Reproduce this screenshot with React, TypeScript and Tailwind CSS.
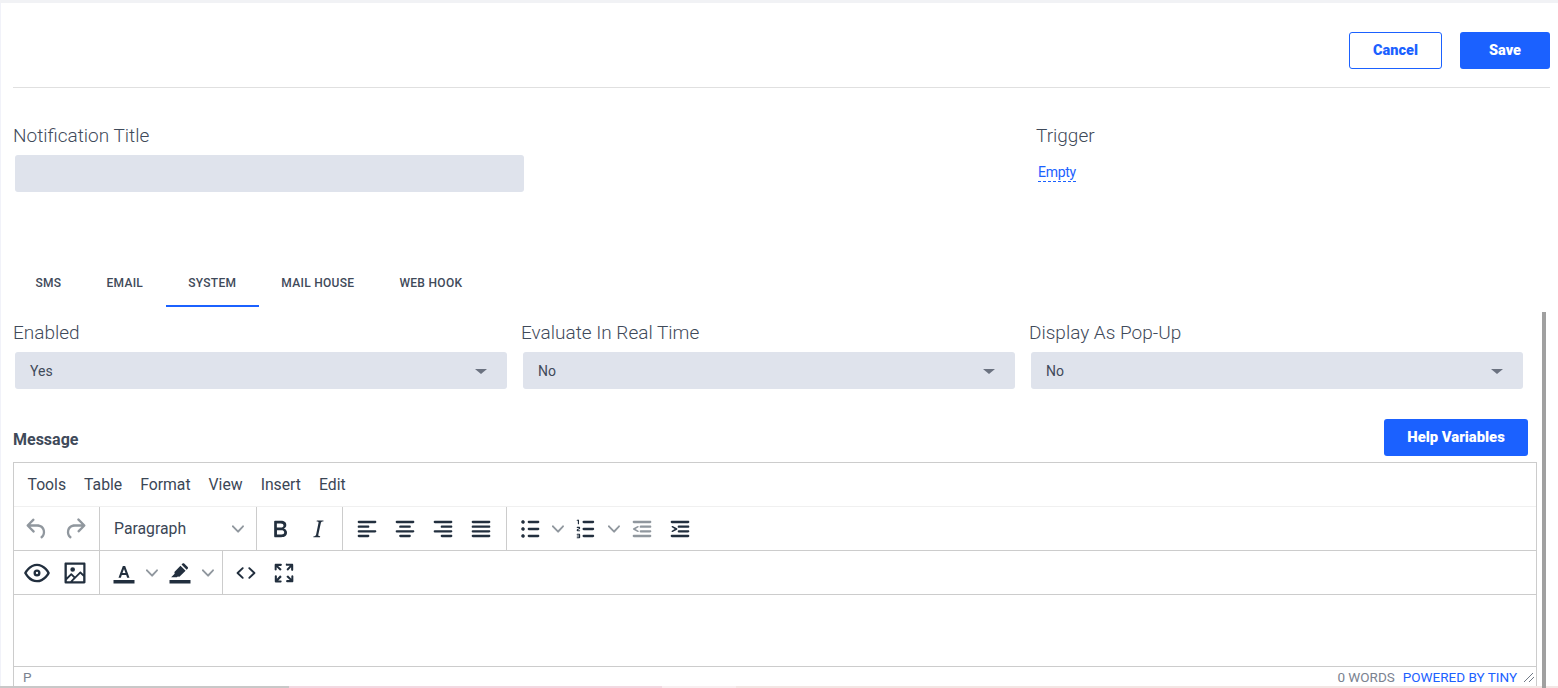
import type { ReactNode } from "react";

const tabs = ["SMS", "EMAIL", "SYSTEM", "MAIL HOUSE", "WEB HOOK"];
const menus = ["Tools", "Table", "Format", "View", "Insert", "Edit"];
const selects = [
  { label: "Enabled", value: "Yes" },
  { label: "Evaluate In Real Time", value: "No" },
  { label: "Display As Pop-Up", value: "No" },
];

const paths = {
  undo: "M6.4 8H12c3.7 0 6.2 2 6.8 5.1.6 2.7-.4 5.6-2.3 6.8a1 1 0 0 1-1-1.8c1.1-.6 1.8-2.7 1.4-4.6-.5-2.1-2.1-3.5-4.9-3.5H6.4l3.3 3.3a1 1 0 1 1-1.4 1.4l-5-5a1 1 0 0 1 0-1.4l5-5a1 1 0 0 1 1.4 1.4L6.4 8z",
  redo: "M17.6 10H12c-2.8 0-4.4 1.4-4.9 3.5-.4 2 .3 4 1.4 4.6a1 1 0 1 1-1 1.8c-2-1.2-2.9-4.1-2.3-6.8.6-3 3-5.1 6.8-5.1h5.6l-3.3-3.3a1 1 0 1 1 1.4-1.4l5 5a1 1 0 0 1 0 1.4l-5 5a1 1 0 0 1-1.4-1.4l3.3-3.3z",
  bold: "M7.8 19c-.3 0-.5 0-.6-.2l-.2-.5V5.7c0-.2 0-.4.2-.5l.6-.2h5c1.5 0 2.7.3 3.5 1 .7.6 1.1 1.4 1.1 2.5a3 3 0 0 1-.6 1.9c-.4.6-1 1-1.6 1.2.4.1.9.3 1.3.6s.8.7 1 1.2c.4.4.5 1 .5 1.6 0 1.3-.4 2.3-1.3 3-.8.7-2.1 1-3.8 1H7.8zm5-8.3c.6 0 1.2-.1 1.6-.5.4-.3.6-.7.6-1.3 0-1.1-.8-1.7-2.3-1.7H9.3v3.5h3.4zm.5 6c.7 0 1.3-.1 1.7-.4.4-.4.6-.9.6-1.5s-.2-1-.7-1.4c-.4-.3-1-.4-2-.4H9.4v3.8h4z",
  italic: "M16.7 4.7l-.1.9h-.3c-.6 0-1 0-1.4.3-.3.3-.4.6-.5 1.1l-2.1 9.8v.6c0 .5.4.8 1.4.8h.2l-.2.8H8l.2-.8h.2c1.1 0 1.8-.5 2-1.5l2-9.8.1-.5c0-.6-.4-.8-1.4-.8h-.3l.2-.9h5.8z",
  alignLeft: "M5 5h14c.6 0 1 .4 1 1s-.4 1-1 1H5a1 1 0 1 1 0-2zm0 4h8c.6 0 1 .4 1 1s-.4 1-1 1H5a1 1 0 1 1 0-2zm0 8h8c.6 0 1 .4 1 1s-.4 1-1 1H5a1 1 0 0 1 0-2zm0-4h14c.6 0 1 .4 1 1s-.4 1-1 1H5a1 1 0 0 1 0-2z",
  alignCenter: "M5 5h14c.6 0 1 .4 1 1s-.4 1-1 1H5a1 1 0 1 1 0-2zm3 4h8c.6 0 1 .4 1 1s-.4 1-1 1H8a1 1 0 1 1 0-2zm0 8h8c.6 0 1 .4 1 1s-.4 1-1 1H8a1 1 0 0 1 0-2zm-3-4h14c.6 0 1 .4 1 1s-.4 1-1 1H5a1 1 0 0 1 0-2z",
  alignRight: "M5 5h14c.6 0 1 .4 1 1s-.4 1-1 1H5a1 1 0 1 1 0-2zm6 4h8c.6 0 1 .4 1 1s-.4 1-1 1h-8a1 1 0 0 1 0-2zm0 8h8c.6 0 1 .4 1 1s-.4 1-1 1h-8a1 1 0 0 1 0-2zm-6-4h14c.6 0 1 .4 1 1s-.4 1-1 1H5a1 1 0 0 1 0-2z",
  justify: "M5 5h14c.6 0 1 .4 1 1s-.4 1-1 1H5a1 1 0 1 1 0-2zm0 4h14c.6 0 1 .4 1 1s-.4 1-1 1H5a1 1 0 1 1 0-2zm0 4h14c.6 0 1 .4 1 1s-.4 1-1 1H5a1 1 0 0 1 0-2zm0 4h14c.6 0 1 .4 1 1s-.4 1-1 1H5a1 1 0 0 1 0-2z",
  bullets: "M11 5h8c.6 0 1 .4 1 1s-.4 1-1 1h-8a1 1 0 0 1 0-2zm0 6h8c.6 0 1 .4 1 1s-.4 1-1 1h-8a1 1 0 0 1 0-2zm0 6h8c.6 0 1 .4 1 1s-.4 1-1 1h-8a1 1 0 0 1 0-2zM4.5 6c0-.4.1-.8.4-1 .3-.4.7-.5 1.1-.5.4 0 .8.1 1 .4.4.3.5.7.5 1.1 0 .4-.1.8-.4 1-.3.4-.7.5-1.1.5-.4 0-.8-.1-1-.4-.4-.3-.5-.7-.5-1.1zm0 6c0-.4.1-.8.4-1 .3-.4.7-.5 1.1-.5.4 0 .8.1 1 .4.4.3.5.7.5 1.1 0 .4-.1.8-.4 1-.3.4-.7.5-1.1.5-.4 0-.8-.1-1-.4-.4-.3-.5-.7-.5-1.1zm0 6c0-.4.1-.8.4-1 .3-.4.7-.5 1.1-.5.4 0 .8.1 1 .4.4.3.5.7.5 1.1 0 .4-.1.8-.4 1-.3.4-.7.5-1.1.5-.4 0-.8-.1-1-.4-.4-.3-.5-.7-.5-1.1z",
  numbers: "M10 17h8c.6 0 1 .4 1 1s-.4 1-1 1h-8a1 1 0 0 1 0-2zm0-6h8c.6 0 1 .4 1 1s-.4 1-1 1h-8a1 1 0 0 1 0-2zm0-6h8c.6 0 1 .4 1 1s-.4 1-1 1h-8a1 1 0 1 1 0-2zM6 4v3.5c0 .3-.2.5-.5.5a.5.5 0 0 1-.5-.5V5h-.5a.5.5 0 0 1 0-1H6zm-1 8.8l.2.2h1.3c.3 0 .5.2.5.5s-.2.5-.5.5H4.9a1 1 0 0 1-.9-1V13c0-.4.3-.8.6-1l1.2-.4.2-.3a.2.2 0 0 0-.2-.2H4.5a.5.5 0 0 1-.5-.5c0-.3.2-.5.5-.5h1.6c.5 0 .9.4.9 1v.1c0 .4-.3.8-.6 1l-1.2.4-.2.3zM7 17v2c0 .6-.4 1-1 1H4.5a.5.5 0 0 1 0-1h1.2c.2 0 .3-.1.3-.3 0-.2-.1-.3-.3-.3H4.4a.4.4 0 1 1 0-.8h1.3c.2 0 .3-.1.3-.3 0-.2-.1-.3-.3-.3H4.5a.5.5 0 1 1 0-1H6c.6 0 1 .4 1 1z",
  outdent: "M5 5h14c.6 0 1 .4 1 1s-.4 1-1 1H5a1 1 0 1 1 0-2zm6 4h8c.6 0 1 .4 1 1s-.4 1-1 1h-8a1 1 0 0 1 0-2zm0 4h8c.6 0 1 .4 1 1s-.4 1-1 1h-8a1 1 0 0 1 0-2zm-6 4h14a1 1 0 0 1 0 2H5a1 1 0 0 1 0-2zm3.300-2.400L4.600 12.700a.9.9 0 0 1 0-1.400l3.700-1.900c.4-.2.900.1.900.5v.2c0 .2-.1.400-.3.500L6.500 12l2.400 1.400c.2.100.3.300.3.500v.2c0 .4-.5.700-.9.500z",
  indent: "M5 5h14c.6 0 1 .4 1 1s-.4 1-1 1H5a1 1 0 1 1 0-2zm6 4h8c.6 0 1 .4 1 1s-.4 1-1 1h-8a1 1 0 0 1 0-2zm0 4h8c.6 0 1 .4 1 1s-.4 1-1 1h-8a1 1 0 0 1 0-2zm-6 4h14a1 1 0 0 1 0 2H5a1 1 0 0 1 0-2zm.700-2.400l3.700-1.900a.9.9 0 0 0 0-1.400L5.700 9.400c-.4-.2-.9.1-.9.5v.2c0 .2.1.400.3.500L7.500 12l-2.400 1.400c-.2.100-.3.300-.3.500v.2c0 .4.5.700.900.500z",
  eye: "M3.5 12.5c.5.8 1.1 1.6 1.8 2.3 2 2 4.2 3.2 6.7 3.2s4.7-1.2 6.7-3.2a16.2 16.2 0 0 0 2.1-2.8 15.7 15.7 0 0 0-2.1-2.8c-2-2-4.2-3.2-6.7-3.2a9.3 9.3 0 0 0-6.7 3.2A16.2 16.2 0 0 0 3.2 12c0 .2.2.3.3.5zm-2.4-1l.7-1.2L4 7.8C6.2 5.4 8.9 4 12 4c3 0 5.8 1.4 8.1 3.8a18.2 18.2 0 0 1 2.8 3.7v1l-.7 1.2-2.1 2.5c-2.3 2.4-5 3.8-8.1 3.8a11 11 0 0 1-8.1-3.8 18.2 18.2 0 0 1-2.8-3.7 1 1 0 0 1 0-1zM12 15a3 3 0 1 1 0-6 3 3 0 0 1 0 6zm0-2a1 1 0 1 0 0-2 1 1 0 0 0 0 2z",
  image: "M5 15.7l3.3-3.2c.3-.3.7-.3 1 0L12 15l4.1-4c.3-.4.8-.4 1 0l2 1.9V5H5v10.7zM5 18V19h3l2.8-2.9-2-2L5 17.9zm14-3l-2.5-2.4-6.4 6.5H19v-4zM4 3h16c.6 0 1 .4 1 1v16c0 .6-.4 1-1 1H4a1 1 0 0 1-1-1V4c0-.6.4-1 1-1zm6 8a2 2 0 1 0 0-4 2 2 0 0 0 0 4z",
  textColor: "M3 18h18v3H3zM11 6h2l3.700 10h-2l-.8-2.300H10.100L9.300 16h-2L11 6zm-.3 6h2.600L12 8.500 10.700 12z",
  highlight: "M3 18h18v3H3zM15.600 3.900l3 3c.4.4.4 1 0 1.400l-.9.900-4.400-4.400.9-.9c.4-.4 1-.4 1.400 0zM12.400 5.700l4.400 4.400-5.300 5.100-1.400-.3-.8.700H4.400l3-3-.2-1.400z",
  code: "M9.800 15.700c.3.3.3.8 0 1-.3.400-.9.400-1.200 0l-4.400-4.100a.8.8 0 0 1 0-1.200l4.400-4.200c.3-.3.900-.3 1.200 0 .3.300.3.800 0 1.100L6 12l3.800 3.700zM14.200 15.700L18 12l-3.800-3.700a.8.8 0 0 1 0-1.100c.3-.3.900-.3 1.200 0l4.400 4.200c.3.300.3.900 0 1.200l-4.400 4.100c-.3.400-.9.400-1.200 0a.8.8 0 0 1 0-1z",
  fullscreen: "M15.300 10l-1.200-1.300 2.900-3h-2.300a.9.9 0 1 1 0-1.700H19c.5 0 .9.400.9.900v4.400a.9.9 0 1 1-1.800 0V7l-2.800 3zm0 4l3 2.900v-2.300a.9.9 0 0 1 1.700 0V19c0 .5-.4.900-.9.900h-4.400a.9.9 0 0 1 0-1.800H17l-3-2.800 1.300-1.200zM10 15.400l-2.900 3h2.300a.9.9 0 0 1 0 1.700H5a.9.900 0 0 1-.9-.9v-4.400a.9.9 0 0 1 1.800 0V17l2.800-3 1.200 1.300zM8.700 10L5.700 7v2.300a.9.9 0 0 1-1.700 0V5c0-.5.400-.9.900-.9h4.400a.9.9 0 0 1 0 1.800H7l3 2.800L8.700 10z",
};

function Icon({ d, muted }: { d: string; muted?: boolean }) {
  return (
    <svg width="28" height="28" viewBox="0 0 24 24" fillRule="evenodd" className={muted ? "fill-[#222f3e]/50" : "fill-[#222f3e]"}>
      <path d={d} />
    </svg>
  );
}

function Chevron() {
  return (
    <svg width="12" height="12" viewBox="0 0 10 10" className="fill-[#222f3e]/50">
      <path d="M8.700 2.200c.3-.3.800-.3 1 0 .4.4.4.900 0 1.200L5.700 7.800c-.3.3-.9.3-1.200 0L.2 3.400a.8.8 0 0 1 0-1.200c.3-.3.800-.3 1.100 0L5 6l3.700-3.800z" />
    </svg>
  );
}

function ToolButton({ d, muted }: { d: string; muted?: boolean }) {
  return (
    <div className="mx-[2px] flex h-[34px] w-[34px] items-center justify-center">
      <Icon d={d} muted={muted} />
    </div>
  );
}

function SplitButton({ d }: { d: string }) {
  return (
    <div className="ml-[2px] mr-[-2px] flex h-[34px] items-center">
      <div className="flex w-[34px] justify-center">
        <Icon d={d} />
      </div>
      <div className="flex w-[22px] justify-center">
        <Chevron />
      </div>
    </div>
  );
}

function Group({ children, last, className }: { children: ReactNode; last?: boolean; className?: string }) {
  return (
    <div className={`flex h-full items-center pl-1 ${last ? "" : "border-r border-[#ccc]"} ${className ?? ""}`}>
      {children}
    </div>
  );
}

function Editor() {
  return (
    <div className="mt-[6px] w-[1524px] border border-[#ccc] text-[#3b4656]">
      <div className="flex h-[43px] items-center pt-[1px] pl-[4.500px] text-[15.750px]">
        {menus.map((menu) => (
          <span key={menu} className="mx-[1px] px-2">
            {menu}
          </span>
        ))}
      </div>
      <div className="flex h-[45px] border-y border-t-[#f0f0f0] border-b-[#ccc]">
        <Group className="w-[86px]">
          <ToolButton d={paths.undo} muted />
          <ToolButton d={paths.redo} muted />
        </Group>
        <Group className="w-[157px]">
          <div className="ml-[2px] flex w-[146px] items-center justify-between pl-2 pr-[8px] text-[15.800px]">
            <span>Paragraph</span>
            <Chevron />
          </div>
        </Group>
        <Group className="w-[86px]">
          <ToolButton d={paths.bold} />
          <ToolButton d={paths.italic} />
        </Group>
        <Group className="w-[164px] pl-[5px]">
          <ToolButton d={paths.alignLeft} />
          <ToolButton d={paths.alignCenter} />
          <ToolButton d={paths.alignRight} />
          <ToolButton d={paths.justify} />
        </Group>
        <Group last>
          <SplitButton d={paths.bullets} />
          <SplitButton d={paths.numbers} />
          <ToolButton d={paths.outdent} muted />
          <ToolButton d={paths.indent} />
        </Group>
      </div>
      <div className="flex h-[44px] border-b border-[#ccc]">
        <Group className="w-[86px]">
          <ToolButton d={paths.eye} />
          <ToolButton d={paths.image} />
        </Group>
        <Group className="w-[123px] pl-[5px]">
          <SplitButton d={paths.textColor} />
          <SplitButton d={paths.highlight} />
        </Group>
        <Group last>
          <ToolButton d={paths.code} />
          <ToolButton d={paths.fullscreen} />
        </Group>
      </div>
      <div className="h-[72px] border-b border-[#ccc]" />
      <div className="flex h-[20px] items-center pl-[9px] text-[13.500px] text-[#7a8290]">
        <span>P</span>
        <span className="ml-auto">0 WORDS</span>
        <span className="ml-2 text-[#1b61ff]">POWERED BY TINY</span>
        <svg width="12" height="12" viewBox="0 0 12 12" className="ml-[6px] mr-[1px] stroke-[#6f7986]" fill="none">
          <path d="M1 11 10 2M6 11l5-5" />
        </svg>
      </div>
    </div>
  );
}

export default function App() {
  return (
    <div className="relative flex h-[688px] w-[1558px] flex-col overflow-hidden bg-white font-['Roboto',sans-serif] text-[#3f4a5a]">
      <div className="h-[3px] shrink-0 bg-[#f1f2f5]" />
      <div className="flex min-h-0 flex-1 flex-col overflow-hidden border-l border-[#f1f2f9] pl-[12px]">
        <div className="flex w-[1537px] shrink-0 justify-end gap-[18px] border-b border-[#e0e0e0] pt-[29px] pb-[18px] text-[14.500px] font-black">
          <button className="h-[37px] w-[93px] rounded-[3px] border border-[#1b61ff] text-[#1b61ff]">Cancel</button>
          <button className="h-[37px] w-[90px] rounded-[3px] bg-[#1b61ff] text-white">Save</button>
        </div>

        <div className="mt-[36px] flex shrink-0">
          <div className="w-[1023px]">
            <div className="text-[19px] font-light leading-[24px]">Notification Title</div>
            <div className="mt-[7px] ml-[2px] h-[37px] w-[509px] rounded-[3px] bg-[#dfe3ec]" />
          </div>
          <div>
            <div className="text-[19px] font-light leading-[24px]">Trigger</div>
            <a className="mt-[16px] ml-[2px] inline-block border-b border-dashed border-[#1b61ff] text-[14px] leading-[17px] tracking-[-0.3px] text-[#1b61ff]">
              Empty
            </a>
          </div>
        </div>

        <div className="mt-[68px] flex shrink-0">
          {tabs.map((tab) => (
            <div
              key={tab}
              className={`flex h-[47px] items-center border-b-2 px-[22.500px] text-[12px] font-medium tracking-[0.3px] ${
                tab === "SYSTEM" ? "border-[#1b61ff]" : "border-transparent"
              }`}
            >
              {tab}
            </div>
          ))}
        </div>

        <div className="mt-[14px] grid w-[1524px] shrink-0 grid-cols-3">
          {selects.map((select) => (
            <div key={select.label}>
              <div className="text-[19px] font-light leading-[24px]">{select.label}</div>
              <div className="mt-[7px] ml-[2px] flex h-[37px] w-[492px] items-center justify-between rounded-[3px] bg-[#dfe3ec] pl-[15px] pr-[20px] pt-[1px] text-[14px]">
                <span>{select.value}</span>
                <div className="h-0 w-0 border-x-[6px] border-t-[5px] border-x-transparent border-t-[#6b7280]" />
              </div>
            </div>
          ))}
        </div>

        <div className="mt-[30px] flex w-[1515px] shrink-0 items-center justify-between">
          <span className="mt-[5px] text-[16px] font-bold">Message</span>
          <button className="h-[37px] w-[144px] rounded-[3px] bg-[#1b61ff] text-[14.800px] font-black text-white">Help Variables</button>
        </div>

        <Editor />
      </div>
      <div className="flex h-[2px] shrink-0">
        <div className="w-[289px] bg-[#c8c8c8]" />
        <div className="w-[373px] bg-[#f2d9e2]" />
        <div className="w-[74px] bg-[#f9eef0]" />
        <div className="flex-1 bg-[#f3e6e4]" />
      </div>
      {/* page scrollbar */}
      <div className="absolute top-[312px] left-[1542px] h-[376px] w-[4px] bg-[#a0a0a0]" />
    </div>
  );
}
